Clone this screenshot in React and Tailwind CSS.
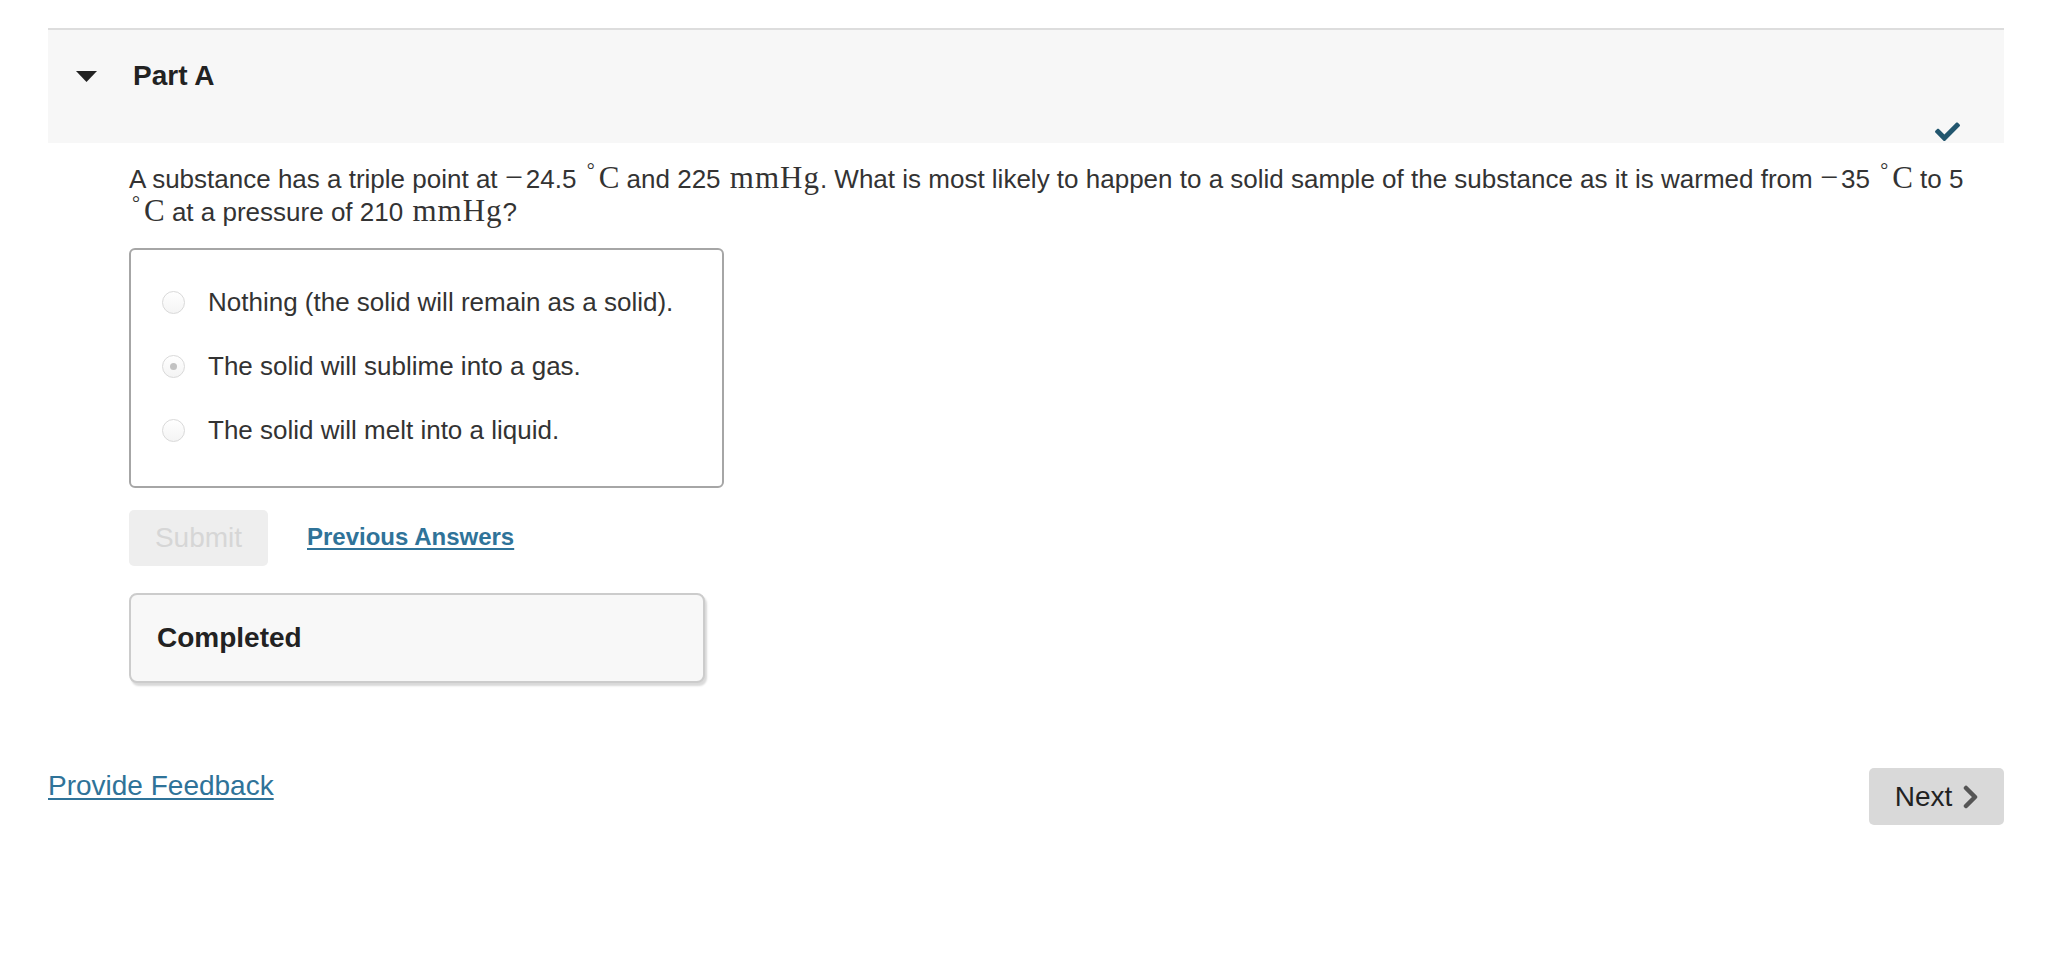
import React, { useState } from 'react';

const options = [
  'Nothing (the solid will remain as a solid).',
  'The solid will sublime into a gas.',
  'The solid will melt into a liquid.',
];

const Math = ({ children, className = '' }) => (
  <span className={`font-['Liberation_Serif','Times_New_Roman',serif] text-[31px] leading-none ${className}`}>
    {children}
  </span>
);

const Minus = () => <Math className="mr-[3px] text-[32px]">−</Math>;

const Deg = () => (
  <Math className="ml-[3px]">
    <span className="relative -top-[11px] mr-[4px] text-[20px]">°</span>C
  </Math>
);

const Unit = () => <Math className="ml-[2px] tracking-[1px]">mmHg</Math>;

const Radio = ({ checked }) => (
  <span className="flex h-[23px] w-[23px] shrink-0 items-center justify-center rounded-full border border-[#d9d9d9] bg-gradient-to-b from-white to-[#f4f4f4]">
    {checked && <span className="h-[7px] w-[7px] rounded-full bg-[#c2c2c2]" />}
  </span>
);

const App = () => {
  const [selected] = useState(1);

  return (
    <div className="min-h-screen bg-white pl-12 pr-[60px] pt-7 font-['Liberation_Sans',Arial,sans-serif] text-[#333]">
      <section className="border-t-2 border-[#dddddd]">
        {/* Part header */}
        <div className="relative h-[113px] bg-[#f7f7f7]">
          <div className="box-content flex h-8 items-center pt-[30px]">
            <svg className="ml-7 h-[11px] w-[21px]" viewBox="0 0 21 11">
              <polygon points="0,0 21,0 10.5,11" fill="#222" />
            </svg>
            <h2 className="ml-9 text-[28px] font-bold leading-8 text-[#222]">Part A</h2>
          </div>
          <svg className="absolute bottom-[2px] right-[44px] h-[20px] w-[25px]" viewBox="0 0 512 410">
            <path
              fill="#22566e"
              d="M173.898 403.404l-166.4-166.4c-9.997-9.997-9.997-26.206 0-36.204l36.203-36.204c9.997-9.998 26.207-9.998 36.204 0L192 276.69 432.095 36.596c9.997-9.997 26.207-9.997 36.204 0l36.203 36.204c9.997 9.997 9.997 26.206 0 36.204l-294.4 294.401c-9.998 9.997-26.207 9.997-36.204-.001z"
            />
          </svg>
        </div>

        <div className="pl-[81px]">
          <p className="mt-[18px] pr-6 text-[26px] leading-8">
            A substance has a triple point at <Minus />24.5 <Deg /> and 225 <Unit />. What is most likely to happen
            to a solid sample of the substance as it is warmed from <Minus />35 <Deg /> to 5 <Deg /> at a pressure of
            210 <Unit />?
          </p>

          {/* Choices */}
          <div className="mt-5 w-[595px] rounded-md border-2 border-[#a6a6a6] pb-6 pl-[31px] pt-5">
            {options.map((label, i) => (
              <label key={label} className="flex h-16 items-center gap-[23px] text-[26px]">
                <Radio checked={selected === i} />
                <span>{label}</span>
              </label>
            ))}
          </div>

          {/* Actions */}
          <div className="mt-[22px] flex items-center">
            <button disabled className="h-14 w-[139px] rounded-[5px] bg-[#eeeeee] text-[28px] text-[#d6d6d6]">
              Submit
            </button>
            <a
              href="#"
              className="-mt-[3px] ml-[39px] text-[24px] font-bold text-[#2f7399] underline underline-offset-[3px]"
            >
              Previous Answers
            </a>
          </div>

          <div className="mt-[27px] flex h-[90px] w-[576px] items-center rounded-lg border-2 border-[#cccccc] bg-[#f8f8f8] pl-[26px] shadow-[2px_3px_2px_rgba(0,0,0,0.15)]">
            <span className="text-[28px] font-bold text-[#222]">Completed</span>
          </div>
        </div>
      </section>

      {/* Footer */}
      <div className="mt-[85px] flex items-start justify-between">
        <a href="#" className="mt-[2px] text-[28px] leading-8 text-[#2f7399] underline underline-offset-[3px]">
          Provide Feedback
        </a>
        <button className="flex h-[57px] w-[135px] items-center justify-center gap-[11px] rounded-[5px] bg-[#d9d9d9] text-[28px] text-[#222]">
          Next
          <svg className="h-6 w-[15px]" viewBox="0 0 15 24">
            <polyline
              points="3,3 12,12 3,21"
              fill="none"
              stroke="#555"
              strokeWidth="4.5"
              strokeLinecap="round"
              strokeLinejoin="round"
            />
          </svg>
        </button>
      </div>
    </div>
  );
};

export default App;
